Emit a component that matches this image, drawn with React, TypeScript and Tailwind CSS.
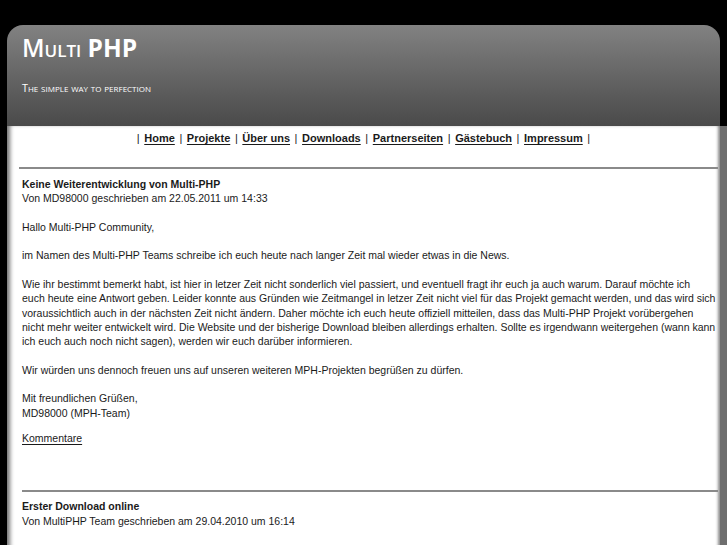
import React from "react";

// Top navigation links
const navLinks = ["Home", "Projekte", "Über uns", "Downloads", "Partnerseiten", "Gästebuch", "Impressum"];

function NavBar() {
  return (
    <div className="pt-[5px] pb-[22px] text-center text-[11px] leading-[14px] text-[#1a1a1a]">
      <span>|</span>
      {navLinks.map((l) => (
        <React.Fragment key={l}>
          <a href="#" className="mx-[4.6px] font-bold underline underline-offset-2">
            {l}
          </a>
          <span>|</span>
        </React.Fragment>
      ))}
    </div>
  );
}

export default function App() {
  return (
    <div
      className="min-h-screen bg-black pt-[25px] text-[#1a1a1a]"
      style={{ fontFamily: '"Liberation Sans", Arial, sans-serif' }}
    >
      {/* Header */}
      <div className="ml-[7px] mr-[7px] h-[101px] rounded-t-[16px] bg-gradient-to-b from-[#828282] to-[#4a4a4a] px-[15px] pt-[8px] text-white">
        <div
          className="text-[24.5px] leading-[30px] [font-variant:small-caps]"
          style={{ fontFamily: '"Open Sans", "DejaVu Sans", sans-serif' }}
        >
          <span className="font-semibold">Multi</span> <span className="font-bold">PHP</span>
        </div>
        <div
          className="mt-[18px] text-[10.8px] leading-[14px] [font-variant:small-caps]"
          style={{ fontFamily: '"Open Sans", "DejaVu Sans", sans-serif' }}
        >
          The simple way to perfection
        </div>
      </div>

      {/* Content */}
      <div className="ml-[7px] border-r-[7px] border-[#6e6e6e] bg-white pb-[20px] shadow-[inset_5px_0_4px_-2px_rgba(0,0,0,0.55),inset_-4px_0_3px_-2px_rgba(0,0,0,0.45)]">
        <NavBar />
        <div className="ml-[12px] mr-[2px] h-[2px] bg-[#8a8a8a]" />

        <div className="whitespace-nowrap px-[15px] pt-[8px] text-[10.5px] leading-[14.3px]">
          <div className="font-bold">Keine Weiterentwicklung von Multi-PHP</div>
          <div>Von MD98000 geschrieben am 22.05.2011 um 14:33</div>
          <p className="mt-[14.3px]">Hallo Multi-PHP Community,</p>
          <p className="mt-[14.3px]">
            im Namen des Multi-PHP Teams schreibe ich euch heute nach langer Zeit mal wieder etwas in die News.
          </p>
          <p className="mt-[14.3px]">
            Wie ihr bestimmt bemerkt habt, ist hier in letzer Zeit nicht sonderlich viel passiert, und eventuell fragt ihr euch ja auch warum. Darauf möchte ich
            <br />
            euch heute eine Antwort geben. Leider konnte aus Gründen wie Zeitmangel in letzer Zeit nicht viel für das Projekt gemacht werden, und das wird sich
            <br />
            voraussichtlich auch in der nächsten Zeit nicht ändern. Daher möchte ich euch heute offiziell mitteilen, dass das Multi-PHP Projekt vorübergehen
            <br />
            nicht mehr weiter entwickelt wird. Die Website und der bisherige Download bleiben allerdings erhalten. Sollte es irgendwann weitergehen (wann kann
            <br />
            ich euch auch noch nicht sagen), werden wir euch darüber informieren.
          </p>
          <p className="mt-[14.3px]">Wir würden uns dennoch freuen uns auf unseren weiteren MPH-Projekten begrüßen zu dürfen.</p>
          <p className="mt-[14.3px]">
            Mit freundlichen Grüßen,
            <br />
            MD98000 (MPH-Team)
          </p>
          <p className="mt-[11px]">
            <a href="#" className="underline underline-offset-2">
              Kommentare
            </a>
          </p>
        </div>

        <div className="ml-[15px] mr-[2px] mt-[45px] h-[2px] bg-[#8a8a8a]" />

        <div className="whitespace-nowrap px-[15px] pt-[7px] text-[10.5px] leading-[14.3px]">
          <div className="font-bold">Erster Download online</div>
          <div>Von MultiPHP Team geschrieben am 29.04.2010 um 16:14</div>
        </div>
      </div>
    </div>
  );
}
